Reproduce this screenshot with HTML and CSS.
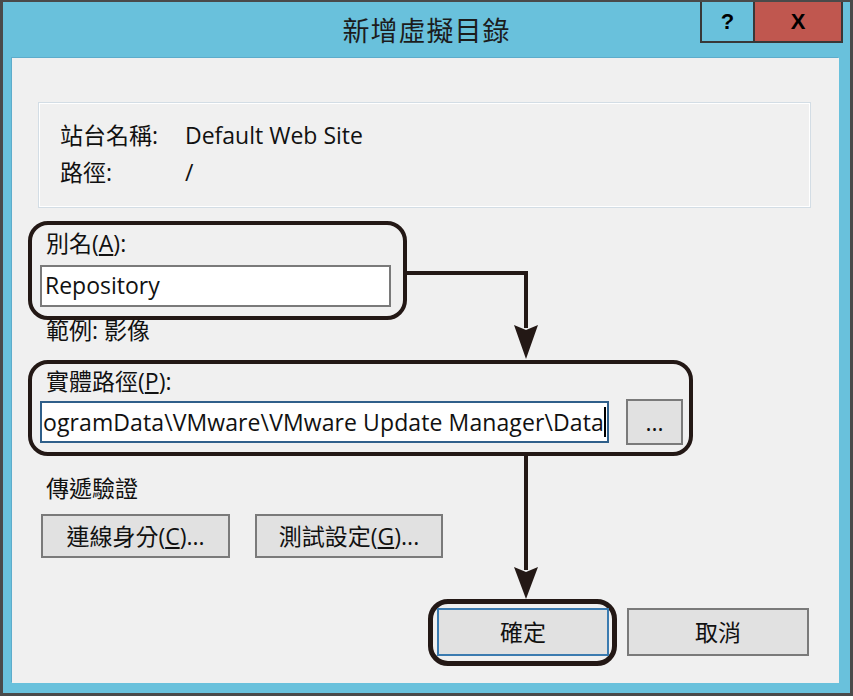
FILE: index.html
```html
<!DOCTYPE html>
<html lang="zh-Hant">
<head>
<meta charset="utf-8">
<title>新增虛擬目錄</title>
<link rel="stylesheet" href="styles.css">
</head>
<body>
<div class="window">
  <div class="titlebar">
    <div class="title-spacer"></div>
    <div class="title">新增虛擬目錄</div>
    <div class="title-buttons">
      <div class="tb-help">?</div>
      <div class="tb-close">X</div>
    </div>
  </div>
  <div class="content">
    <div class="info-group">
      <div class="info-label">站台名稱:</div><div class="info-value">Default Web Site</div>
      <div class="info-label">路徑:</div><div class="info-value">/</div>
    </div>

    <div class="callout callout-alias">
      <div class="label">別名(<u>A</u>):</div>
      <div class="textbox textbox-alias">Repository</div>
    </div>
    <div class="hint">範例: 影像</div>

    <div class="callout callout-path">
      <div class="label">實體路徑(<u>P</u>):</div>
      <div class="path-row">
        <div class="textbox textbox-path"><span class="path-text">ogramData\VMware\VMware Update Manager\Data</span></div>
        <div class="btn btn-browse">...</div>
      </div>
    </div>

    <div class="section-label">傳遞驗證</div>
    <div class="auth-row">
      <div class="btn btn-auth1">連線身分(<u>C</u>)...</div>
      <div class="btn btn-auth2">測試設定(<u>G</u>)...</div>
    </div>

    <div class="footer-row">
      <div class="callout callout-ok">
        <div class="btn btn-ok">確定</div>
      </div>
      <div class="btn btn-cancel">取消</div>
    </div>

    <svg class="arrows" width="827" height="625" viewBox="0 0 827 625">
      <polyline points="393,215 514,215 514,270" fill="none" stroke="#231815" stroke-width="4" stroke-linejoin="miter"/>
      <polygon points="502,267 514,272 526,267 514,301" fill="#231815"/>
      <line x1="514" y1="398" x2="514" y2="512" stroke="#231815" stroke-width="4"/>
      <polygon points="502,509 514,514 526,509 514,541" fill="#231815"/>
    </svg>
  </div>
</div>
</body>
</html>
```

FILE: styles.css
```css
html, body {
  margin: 0;
  padding: 0;
  background: #ffffff;
}

body {
  font-family: "Open Sans", "Noto Sans CJK TC", sans-serif;
  font-size: 23px;
  color: #111111;
}

.window {
  width: 853px;
  height: 696px;
  box-sizing: border-box;
  border-style: solid;
  border-color: #4a4a4a;
  border-width: 2px 3px 3px 3px;
  background: #69c1dc;
}

.titlebar {
  height: 56px;
  display: grid;
  grid-template-columns: 1fr auto 1fr;
  align-items: start;
}

.title {
  font-family: "Noto Sans CJK TC", sans-serif;
  font-size: 27px;
  line-height: 56px;
  color: #1c1c1c;
  letter-spacing: 1px;
}

.title-buttons {
  justify-self: end;
  margin-right: 7px;
  display: flex;
  border: 2px solid #383838;
  border-top: none;
  height: 39px;
}

.tb-help, .tb-close {
  font-family: "Liberation Sans", sans-serif;
  font-weight: bold;
  font-size: 22px;
  line-height: 40px;
  text-align: center;
  color: #000;
}

.tb-help {
  width: 51px;
  background: #69c1dc;
  border-right: 2px solid #383838;
}

.tb-close {
  width: 86px;
  background: #c0574f;
}

.content {
  position: relative;
  margin: 0 11px 0 9px;
  height: 625px;
  background: #f0f0f0;
  box-shadow: -1px -1px 0 #5daccb;
  display: flex;
  flex-direction: column;
  align-items: flex-start;
}

.info-group {
  margin: 44px 0 0 26px;
  width: 773px;
  height: 106px;
  box-sizing: border-box;
  border: 1px solid #d3dde5;
  box-shadow: inset 1px 1px 0 #ffffff, inset -1px -1px 0 #ffffff;
  padding: 14px 0 0 21px;
  display: grid;
  grid-template-columns: 125px auto;
  grid-auto-rows: 37px;
  line-height: 37px;
}

.callout {
  box-sizing: border-box;
  border: 4px solid #231815;
  border-radius: 20px;
}

.label {
  line-height: 26px;
  margin-left: 6px;
}

.callout-alias {
  margin: 13px 0 0 16px;
  width: 379px;
  height: 99px;
  padding: 5px 12px 9px 8px;
  display: flex;
  flex-direction: column;
  gap: 9px;
}

.textbox {
  box-sizing: border-box;
  background: #ffffff;
  white-space: nowrap;
  overflow: hidden;
}

.textbox-alias {
  width: 351px;
  height: 42px;
  border: 2px solid #7a7a7a;
  padding-left: 3px;
  line-height: 37px;
}

.hint {
  margin: -3px 0 0 34px;
  line-height: 26px;
}

.callout-path {
  margin: 17px 0 0 16px;
  width: 665px;
  height: 96px;
  padding: 4px 6px 7px 8px;
  display: flex;
  flex-direction: column;
  gap: 5px;
}

.path-row {
  display: flex;
  align-items: center;
  gap: 17px;
  height: 46px;
}

.textbox-path {
  width: 569px;
  height: 42px;
  border: 2px solid #2f5f8a;
  display: flex;
  justify-content: flex-start;
  padding-left: 1px;
}

.path-text {
  flex: none;
  letter-spacing: 0.1px;
  border-right: 2px solid #000;
  line-height: 30px;
  margin-top: 4px;
  height: 30px;
}

.btn {
  box-sizing: border-box;
  background: #e1e1e1;
  border: 2px solid #7a7a7a;
  text-align: center;
}

.btn-browse {
  width: 57px;
  height: 46px;
  line-height: 42px;
}

.section-label {
  margin: 19px 0 0 34px;
  line-height: 26px;
}

.auth-row {
  margin: 13px 0 0 29px;
  display: flex;
  gap: 25px;
}

.btn-auth1, .btn-auth2 {
  height: 44px;
  line-height: 40px;
}

.btn-auth1 { width: 189px; }
.btn-auth2 { width: 188px; }

.footer-row {
  margin-top: 41px;
  align-self: stretch;
  display: flex;
  justify-content: flex-end;
  align-items: flex-start;
  padding-right: 30px;
}

.callout-ok {
  border-width: 5px;
  width: 189px;
  height: 67px;
  padding: 4px 3px 5px 4px;
}

.btn-ok {
  width: 172px;
  height: 48px;
  line-height: 44px;
  border-color: #3b7bb0;
}

.btn-cancel {
  margin: 9px 0 0 10px;
  width: 182px;
  height: 48px;
  line-height: 44px;
}

.arrows {
  position: absolute;
  left: 0;
  top: 0;
  pointer-events: none;
}
```
